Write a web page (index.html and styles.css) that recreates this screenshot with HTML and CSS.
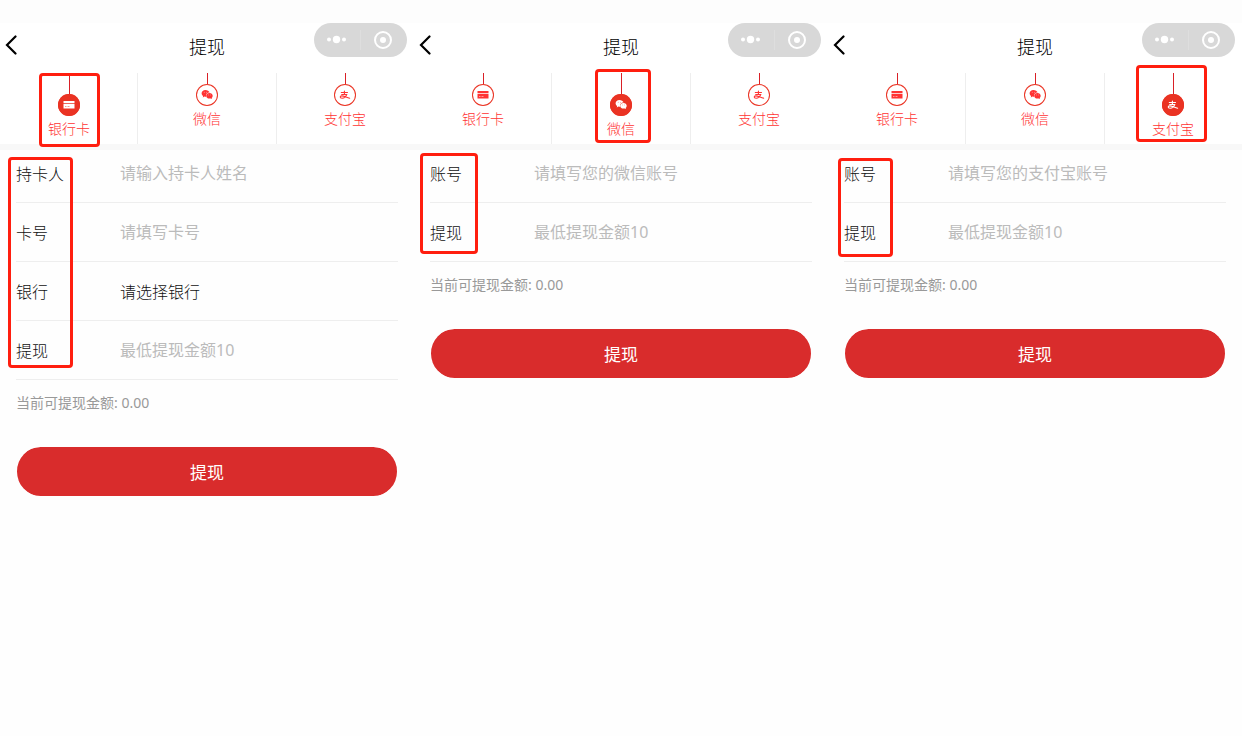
FILE: index.html
```html
<!DOCTYPE html>
<html lang="zh-CN">
<head>
<meta charset="utf-8">
<meta name="viewport" content="width=device-width, initial-scale=1">
<title>提现</title>
<link rel="stylesheet" href="styles.css">
</head>
<body>
<svg class="sprite" aria-hidden="true">
  <symbol id="back" viewBox="0 0 12 20"><path d="M10.500 1.500 2 10l8.500 8.500" fill="none" stroke="#000" stroke-width="2.200" stroke-linecap="round"/></symbol>
  <symbol id="capsule" viewBox="0 0 93 34">
    <rect width="93" height="34" rx="17" fill="#d8d8d8"/>
    <g fill="#fff"><circle cx="15" cy="16.500" r="2"/><circle cx="22.500" cy="16.500" r="3.700"/><circle cx="30" cy="16.500" r="2"/><circle cx="69" cy="17" r="3"/></g>
    <path d="M46.500 7v20" stroke="#dedede"/>
    <circle cx="69" cy="17" r="8" fill="none" stroke="#fff" stroke-width="2"/>
  </symbol>
  <symbol id="card" viewBox="0 0 22 22">
    <path fill="currentColor" fill-rule="evenodd" d="M5.500 7h11v2.200h-11zM5.500 10h11v4.500h-11zM7 12.600v.5h1.500v-.5zm2.500-.5v.5h2v-.5z"/>
  </symbol>
  <symbol id="wechat" viewBox="0 0 22 22">
    <path fill="currentColor" fill-rule="evenodd" d="M9.300 6C7.300 6 5.600 7.500 5.600 9.300c0 1.100.6 2 1.500 2.700l-.3 1.400 1.600-.8c.6.2 1.100.2 1.700.2-.6-2.600 1.300-4.400 3.500-4.300C13.100 6.900 11.400 6 9.300 6zM8.200 7.800a.4.400 0 1 1 0 .8.400.4 0 0 1 0-.8zm2.500 0a.4.400 0 1 1 0 .8.400.4 0 0 1 0-.8z"/>
    <path fill="currentColor" fill-rule="evenodd" d="M13.400 8.900c-1.900 0-3.200 1.200-3.200 2.800s1.300 2.900 3.200 2.900c.5 0 .9-.1 1.300-.2l1.300.7-.3-1.100c.7-.5 1-1.300 1-2.200 0-1.600-1.400-2.900-3.300-2.900zm-1 1.700a.3.300 0 1 1 0 .6.300.3 0 0 1 0-.6zm2.200 0a.3.300 0 1 1 0 .6.300.3 0 0 1 0-.6z"/>
  </symbol>
  <symbol id="alipay" viewBox="0 0 22 22">
    <g fill="none" stroke="currentColor" stroke-width="1.100" stroke-linecap="round">
      <path d="M7.300 8.500h6.200M10.400 7v3.500M7.700 10.500h5c-.7 1.900-2.500 3.700-4.600 3.700-1.300 0-1.900-.5-1.900-1.200 0-.8.700-1.100 1.600-1.100 2 0 4.500 1.400 7.900 2.300"/>
    </g>
  </symbol>
</svg>
<main class="board">
  <section class="screen">
    <header class="bar">
      <button class="back" type="button" aria-label="返回"><svg><use href="#back"/></svg></button>
      <h1 class="title">提现</h1>
      <svg class="capsule"><use href="#capsule"/></svg>
    </header>
    <nav class="tabs">
      <button class="tab active" type="button"><svg class="icon"><use href="#card"/></svg><span>银行卡</span><i class="mark mark-card"></i></button>
      <button class="tab" type="button"><svg class="icon"><use href="#wechat"/></svg><span>微信</span></button>
      <button class="tab" type="button"><svg class="icon"><use href="#alipay"/></svg><span>支付宝</span></button>
    </nav>
    <form class="form">
      <div class="row"><label for="holder">持卡人</label><input id="holder" type="text" placeholder="请输入持卡人姓名"></div>
      <div class="row"><label for="number">卡号</label><input id="number" type="text" placeholder="请填写卡号"></div>
      <div class="row"><label for="bank">银行</label><select id="bank"><option>请选择银行</option></select></div>
      <div class="row"><label for="amount1">提现</label><input id="amount1" type="text" placeholder="最低提现金额10"></div>
      <p class="note">当前可提现金额: 0.00</p>
      <button class="submit" type="button">提现</button>
      <i class="mark mark-four"></i>
    </form>
  </section>
  <section class="screen">
    <header class="bar">
      <button class="back" type="button" aria-label="返回"><svg><use href="#back"/></svg></button>
      <h1 class="title">提现</h1>
      <svg class="capsule"><use href="#capsule"/></svg>
    </header>
    <nav class="tabs">
      <button class="tab" type="button"><svg class="icon"><use href="#card"/></svg><span>银行卡</span></button>
      <button class="tab active" type="button"><svg class="icon"><use href="#wechat"/></svg><span>微信</span><i class="mark mark-wechat"></i></button>
      <button class="tab" type="button"><svg class="icon"><use href="#alipay"/></svg><span>支付宝</span></button>
    </nav>
    <form class="form">
      <div class="row"><label for="wx">账号</label><input id="wx" type="text" placeholder="请填写您的微信账号"></div>
      <div class="row"><label for="amount2">提现</label><input id="amount2" type="text" placeholder="最低提现金额10"></div>
      <p class="note">当前可提现金额: 0.00</p>
      <button class="submit" type="button">提现</button>
      <i class="mark mark-two"></i>
    </form>
  </section>
  <section class="screen">
    <header class="bar">
      <button class="back" type="button" aria-label="返回"><svg><use href="#back"/></svg></button>
      <h1 class="title">提现</h1>
      <svg class="capsule"><use href="#capsule"/></svg>
    </header>
    <nav class="tabs">
      <button class="tab" type="button"><svg class="icon"><use href="#card"/></svg><span>银行卡</span></button>
      <button class="tab" type="button"><svg class="icon"><use href="#wechat"/></svg><span>微信</span></button>
      <button class="tab active" type="button"><svg class="icon"><use href="#alipay"/></svg><span>支付宝</span><i class="mark mark-alipay"></i></button>
    </nav>
    <form class="form">
      <div class="row"><label for="ali">账号</label><input id="ali" type="text" placeholder="请填写您的支付宝账号"></div>
      <div class="row"><label for="amount3">提现</label><input id="amount3" type="text" placeholder="最低提现金额10"></div>
      <p class="note">当前可提现金额: 0.00</p>
      <button class="submit" type="button">提现</button>
      <i class="mark mark-pair"></i>
    </form>
  </section>
</main>
</body>
</html>
```
FILE: styles.css
```css
* { box-sizing: border-box; }

body {
  margin: 0;
  background: #fefefe;
  color: #111;
  font: 300 16px/24px "Noto Sans", "Noto Sans CJK SC", sans-serif;
}

button, input, select { font: inherit; color: inherit; }
button { border: 0; padding: 0; background: none; }

.sprite { position: absolute; width: 0; height: 0; }

.board { display: grid; grid-template-columns: repeat(3, 1fr); }

.bar {
  display: grid;
  grid-template-columns: 1fr auto 1fr;
  align-items: start;
  height: 73px;
  padding: 23px 7px 0;
  background: linear-gradient(#fdfdfd 23px, #fff 23px);
}
.back { justify-self: start; height: 20px; margin: 12px 0 0 -2px; }
.back svg { display: block; width: 12px; height: 20px; }
.title {
  margin: 12px 0 0;
  color: #000;
  font-size: 18px;
  font-weight: 300;
  line-height: 24px;
}
.capsule { justify-self: end; width: 93px; height: 34px; }

.tabs {
  display: grid;
  grid-template-columns: repeat(3, 1fr);
  height: 71px;
  background: #fff;
  box-shadow: 0 6px 0 #f8f8f8;
}
.tab {
  position: relative;
  display: flex;
  flex-direction: column;
  align-items: center;
  color: #ff3333;
  font-size: 14px;
  line-height: 26px;
}
.tab:first-child { box-shadow: inset -1px 0 #eee; }
.tab:last-child { box-shadow: inset 1px 0 #eee; }
.tab::before { content: ""; width: 1px; height: 11px; background: #d92027; }
.tab.active::before { height: 21px; }
.icon {
  width: 22px;
  height: 22px;
  border-radius: 50%;
  box-shadow: inset 0 0 0 1px #ea3323;
}
.tab.active .icon { background: #ea3323; color: #fff; }

.form { position: relative; padding: 0 16px; }
.row {
  display: flex;
  align-items: center;
  height: 59px;
  border-bottom: 1px solid #eee;
}
.row label { width: 104px; padding-top: 2px; }
.row input, .row select {
  flex: 1;
  min-width: 0;
  height: 32px;
  padding: 0;
  border: 0;
  outline: 0;
  background: none;
  appearance: none;
}
.row input { font-weight: 400; }
.row select { height: 34px; padding-top: 2px; }
.row input::placeholder { color: #bbb; opacity: 1; }

.note { margin: 11px 0 32px; color: #999; font-size: 14px; font-weight: 400; }

.submit {
  display: block;
  width: 100%;
  height: 49px;
  padding-top: 2px;
  border: 0 solid transparent;
  border-width: 0 1px;
  border-radius: 25px;
  background: #d92c2c padding-box;
  color: #fff;
  font-size: 17px;
  font-weight: 400;
}

/* Red call-out frames drawn over the screens */
.mark {
  position: absolute;
  z-index: 1;
  border: 3px solid #ff1e0f;
  border-radius: 4px;
  pointer-events: none;
}
.mark-card { top: 0; left: calc(50% - 30px); width: 61px; height: 74px; }
.mark-wechat { top: -4px; left: calc(50% - 26px); width: 56px; height: 74px; }
.mark-alipay { top: -8px; left: calc(50% - 37px); width: 71px; height: 77px; }
.mark-four { top: 13px; left: 8px; width: 65px; height: 211px; }
.mark-two { top: 9px; left: 6px; width: 58px; height: 101px; }
.mark-pair { top: 14px; left: 10px; width: 55px; height: 99px; }
```
